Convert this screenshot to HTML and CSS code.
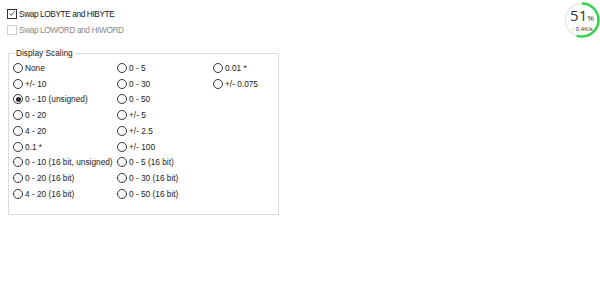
FILE: index.html
```html
<!DOCTYPE html>
<html lang="en">
<head>
    <meta charset="UTF-8">
    <title>Display Scaling</title>
    <link rel="stylesheet" href="styles.css">
</head>
<body>
    <div class="page">
        <div class="checks">
            <label class="check">
                <span class="box checked">
                    <svg width="9" height="9" viewBox="0 0 9 9"><path d="M1.5 4.5 L3.6 6.6 L7.6 2" fill="none" stroke="#333" stroke-width="1"/></svg>
                </span>
                <span class="check-text">Swap LOBYTE and HIBYTE</span>
            </label>
            <label class="check disabled">
                <span class="box"></span>
                <span class="check-text">Swap LOWORD and HIWORD</span>
            </label>
        </div>

        <fieldset class="group">
            <legend>Display Scaling</legend>
            <div class="radios">
                <div class="col">
                    <div class="radio"><span class="dot"></span>None</div>
                    <div class="radio"><span class="dot"></span>+/- 10</div>
                    <div class="radio"><span class="dot on"></span>0 - 10 (unsigned)</div>
                    <div class="radio"><span class="dot"></span>0 - 20</div>
                    <div class="radio"><span class="dot"></span>4 - 20</div>
                    <div class="radio"><span class="dot"></span>0.1 *</div>
                    <div class="radio"><span class="dot"></span>0 - 10 (16 bit, unsigned)</div>
                    <div class="radio"><span class="dot"></span>0 - 20 (16 bit)</div>
                    <div class="radio"><span class="dot"></span>4 - 20 (16 bit)</div>
                </div>
                <div class="col">
                    <div class="radio"><span class="dot"></span>0 - 5</div>
                    <div class="radio"><span class="dot"></span>0 - 30</div>
                    <div class="radio"><span class="dot"></span>0 - 50</div>
                    <div class="radio"><span class="dot"></span>+/- 5</div>
                    <div class="radio"><span class="dot"></span>+/- 2.5</div>
                    <div class="radio"><span class="dot"></span>+/- 100</div>
                    <div class="radio"><span class="dot"></span>0 - 5 (16 bit)</div>
                    <div class="radio"><span class="dot"></span>0 - 30 (16 bit)</div>
                    <div class="radio"><span class="dot"></span>0 - 50 (16 bit)</div>
                </div>
                <div class="col">
                    <div class="radio"><span class="dot"></span>0.01 *</div>
                    <div class="radio"><span class="dot"></span>+/- 0.075</div>
                </div>
            </div>
        </fieldset>
    </div>

    <div class="meter">
        <svg width="38" height="38" viewBox="0 0 38 38">
            <circle cx="19" cy="19" r="16.5" fill="#fff" stroke="#e8e8e8" stroke-width="1.5"/>
            <circle cx="19" cy="19" r="16.5" fill="none" stroke="#36d14a" stroke-width="2.5"
                stroke-dasharray="57 104" transform="rotate(-90 19 19)"/>
        </svg>
        <div class="meter-text">
            <div class="pct">51<small>%</small></div>
            <div class="rate"><span class="arrow">&#8595;</span> 0.4K/s</div>
        </div>
    </div>
</body>
</html>
```

FILE: styles.css
```css
body {
    margin: 0;
    background: #fff;
    font-family: "Liberation Sans", Arial, sans-serif;
    font-size: 8.3px;
    color: #1a1a1a;
}
.page {
    padding: 8px 0 0 7px;
    width: 272px;
}
.checks {
    display: flex;
    flex-direction: column;
    gap: 5px;
}
.check {
    display: flex;
    align-items: center;
    gap: 2px;
    height: 11px;
    white-space: nowrap;
}
.check-text {
    letter-spacing: -0.4px;
}
.box {
    width: 8px;
    height: 8px;
    border: 1px solid #333;
    display: flex;
    align-items: center;
    justify-content: center;
    background: #fff;
}
.box svg {
    display: block;
}
.check.disabled .box {
    border-color: #cfcfcf;
}
.check.disabled .check-text {
    color: #8a8a8a;
}
.group {
    margin: 13px 0 0 1px;
    padding: 0 0 0 4px;
    border: 1px solid #dcdcdc;
    height: 167px;
    box-sizing: border-box;
    width: 271px;
}
.group legend {
    padding: 0 1px;
    margin-left: 2px;
    line-height: 10px;
}
.radios {
    display: grid;
    grid-template-columns: 104px 96px 1fr;
    margin-top: 2px;
}
.radio {
    display: flex;
    align-items: center;
    gap: 2px;
    height: 15.75px;
    white-space: nowrap;
}
.dot {
    width: 8px;
    height: 8px;
    border: 1px solid #333;
    border-radius: 50%;
    display: flex;
    align-items: center;
    justify-content: center;
    flex-shrink: 0;
}
.dot.on::after {
    content: "";
    width: 5px;
    height: 5px;
    border-radius: 50%;
    background: #222;
}
.meter {
    position: absolute;
    top: 1px;
    left: 563px;
    width: 38px;
    height: 38px;
}
.meter svg {
    display: block;
}
.meter-text {
    position: absolute;
    inset: 0;
    display: flex;
    flex-direction: column;
    align-items: center;
    justify-content: center;
    padding-top: 1px;
}
.pct {
    font-family: "Open Sans", sans-serif;
    font-size: 15px;
    line-height: 15px;
    color: #333;
}
.pct small {
    font-size: 8px;
}
.rate {
    font-size: 6px;
    line-height: 8px;
    color: #333;
}
.arrow {
    color: #36d14a;
    font-weight: bold;
}
```
